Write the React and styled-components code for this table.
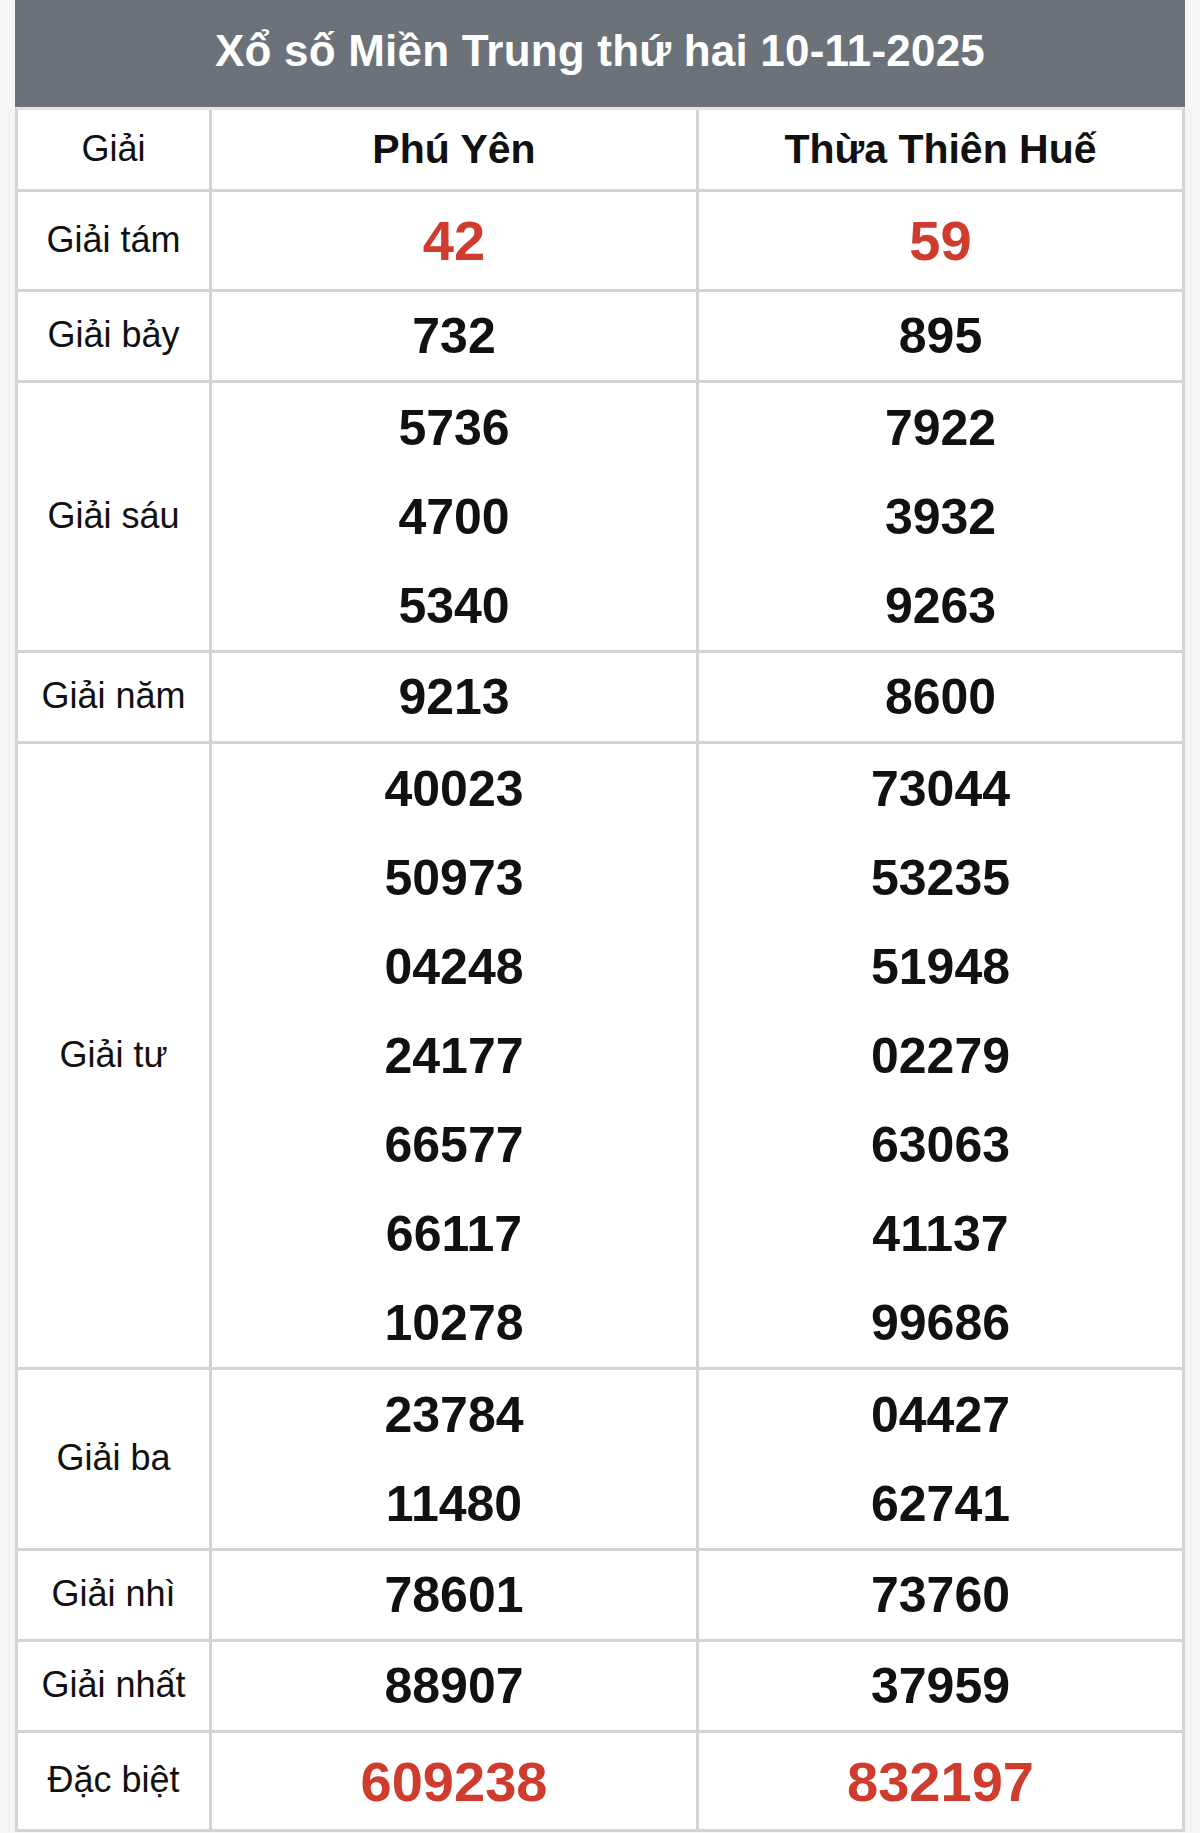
import React from "react";
import styled, { createGlobalStyle } from "styled-components";

const Global = createGlobalStyle`
  html, body { margin: 0; padding: 0; }
  body {
    background: #f6f6f6;
    font-family: "Liberation Sans", Arial, Helvetica, sans-serif;
    color: #111;
  }
`;

const Page = styled.div`
  padding-left: 15px;
  width: 1170px;
`;

const Board = styled.div`
  width: 1170px;
  box-sizing: border-box;
  background: #fff;
`;

const TitleBar = styled.div`
  height: 107px;
  box-sizing: border-box;
  padding-bottom: 5px;
  background: #6b7279;
  display: flex;
  align-items: center;
  justify-content: center;
  color: #fff;
  font-weight: 700;
  font-size: 44px;
  letter-spacing: 0.2px;
`;

const Grid = styled.div`
  border-left: 3px solid #d3d3d3;
  border-right: 3px solid #d3d3d3;
  border-top: 3px solid #e4e4e4;
`;

const Row = styled.div`
  display: grid;
  grid-template-columns: 194px 487px 1fr;
  border-bottom: 3px solid #d3d3d3;
`;

const Cell = styled.div`
  display: flex;
  flex-direction: column;
  align-items: center;
  justify-content: center;
  min-height: ${(p) => p.$h || 88}px;
  border-right: ${(p) => (p.$last ? "none" : "3px solid #d3d3d3")};
`;

const Label = styled.span`
  font-size: 36px;
  font-weight: 400;
  color: #111;
  padding-bottom: 2px;
`;

const Province = styled.span`
  font-size: 41px;
  font-weight: 700;
  color: #111;
`;

const Num = styled.div`
  height: ${(p) => p.$h}px;
  display: flex;
  align-items: center;
  justify-content: center;
  font-size: ${(p) => (p.$red ? 56 : 50)}px;
  font-weight: 700;
  color: ${(p) => (p.$red ? "#cf3b2d" : "#111")};
`;

const rows = [
  { label: "Giải tám", a: ["42"], b: ["59"], red: true, h: 97 },
  { label: "Giải bảy", a: ["732"], b: ["895"], h: 88 },
  { label: "Giải sáu", a: ["5736", "4700", "5340"], b: ["7922", "3932", "9263"], h: 89 },
  { label: "Giải năm", a: ["9213"], b: ["8600"], h: 88 },
  {
    label: "Giải tư",
    a: ["40023", "50973", "04248", "24177", "66577", "66117", "10278"],
    b: ["73044", "53235", "51948", "02279", "63063", "41137", "99686"],
    h: 89,
  },
  { label: "Giải ba", a: ["23784", "11480"], b: ["04427", "62741"], h: 89 },
  { label: "Giải nhì", a: ["78601"], b: ["73760"], h: 88 },
  { label: "Giải nhất", a: ["88907"], b: ["37959"], h: 88 },
  { label: "Đặc biệt", a: ["609238"], b: ["832197"], red: true, h: 96 },
];

export default function App() {
  return (
    <>
      <Global />
      <Page>
        <Board>
          <TitleBar>Xổ số Miền Trung thứ hai 10-11-2025</TitleBar>
          <Grid>
            <Row>
              <Cell $h={79}>
                <Label>Giải</Label>
              </Cell>
              <Cell $h={79}>
                <Province>Phú Yên</Province>
              </Cell>
              <Cell $h={79} $last>
                <Province>Thừa Thiên Huế</Province>
              </Cell>
            </Row>
            {rows.map((r) => (
              <Row key={r.label}>
                <Cell $h={r.h}>
                  <Label>{r.label}</Label>
                </Cell>
                <Cell $h={r.h}>
                  {r.a.map((n, i) => (
                    <Num key={i} $h={r.h} $red={r.red}>
                      {n}
                    </Num>
                  ))}
                </Cell>
                <Cell $h={r.h} $last>
                  {r.b.map((n, i) => (
                    <Num key={i} $h={r.h} $red={r.red}>
                      {n}
                    </Num>
                  ))}
                </Cell>
              </Row>
            ))}
          </Grid>
        </Board>
      </Page>
    </>
  );
}
